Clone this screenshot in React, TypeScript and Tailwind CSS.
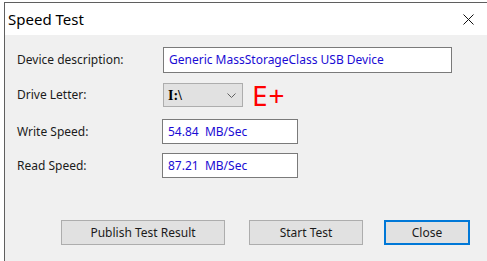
import React from "react";

const font = { fontFamily: '"Noto Sans", "Open Sans", sans-serif' };

const Field: React.FC<{ children: React.ReactNode; className?: string }> = ({ children, className }) => (
  <div
    className={
      "flex items-center bg-white border border-[#7a7a7a] pl-[5px] text-[12px] text-[#1a0bd4] whitespace-pre " +
      (className ?? "")
    }
  >
    {children}
  </div>
);

const Button: React.FC<{ label: string; className?: string; focused?: boolean }> = ({ label, className, focused }) => (
  <button
    className={
      "h-[25px] flex items-center justify-center bg-[#e1e1e1] text-[12px] text-[#1b1b1b] " +
      (focused ? "border-2 border-[#0078d7] " : "border border-[#adadad] ") +
      (className ?? "")
    }
  >
    {label}
  </button>
);

export default function App() {
  return (
    <div className="w-[487px] h-[261px] bg-white pt-[2px] pl-[4px] overflow-hidden" style={font}>
      <div className="h-full flex flex-col border-l border-t border-[#5f5f5f]">
        {/* title bar */}
        <div className="h-[32px] shrink-0 bg-white flex items-center justify-between pl-[3px] pr-[13px]">
          <span className="text-[15px] text-black leading-none">Speed Test</span>
          <svg width="11" height="11" viewBox="0 0 11 11">
            <path d="M0.5 0.5 L10.5 10.5 M10.5 0.5 L0.5 10.5" stroke="#111" strokeWidth="1" />
          </svg>
        </div>

        {/* body */}
        <div className="flex-1 bg-[#f0f0f0] pl-[12px] pt-[12px] text-[12px] text-[#1b1b1b]">
          <div className="flex items-center h-[26px]">
            <span className="w-[146px]">Device description:</span>
            <Field className="w-[289px] h-[26px]">Generic MassStorageClass USB Device</Field>
          </div>

          <div className="flex items-center h-[24px] mt-[10px]">
            <span className="w-[146px]">Drive Letter:</span>
            <div className="w-[80px] h-[24px] flex items-center justify-between bg-[#e1e1e1] border border-[#adadad] pl-[4px] pr-[6px]">
              <span className="text-[14px] font-semibold text-black" style={{ fontFamily: '"Liberation Serif", serif' }}>
                I:\
              </span>
              <svg width="9" height="5" viewBox="0 0 9 5">
                <path d="M0.5 0.5 L4.5 4.5 L8.5 0.5" fill="none" stroke="#606060" strokeWidth="1" />
              </svg>
            </div>
            <span className="ml-[9px] text-[28px] font-normal leading-none text-[#ff0000] tracking-[1px]">E+</span>
          </div>

          <div className="flex items-center h-[25px] mt-[12px]">
            <span className="w-[146px]">Write Speed:</span>
            <Field className="w-[136px] h-[25px] -ml-[1px]">54.84  MB/Sec</Field>
          </div>

          <div className="flex items-center h-[25px] mt-[9px]">
            <span className="w-[146px]">Read Speed:</span>
            <Field className="w-[136px] h-[25px] -ml-[1px]">87.21  MB/Sec</Field>
          </div>

          <div className="flex items-center mt-[42px] pl-[44px]">
            <Button label="Publish Test Result" className="w-[164px]" />
            <Button label="Start Test" className="w-[114px] ml-[24px]" />
            <Button label="Close" className="w-[86px] ml-[21px]" focused />
          </div>
        </div>
      </div>
    </div>
  );
}
